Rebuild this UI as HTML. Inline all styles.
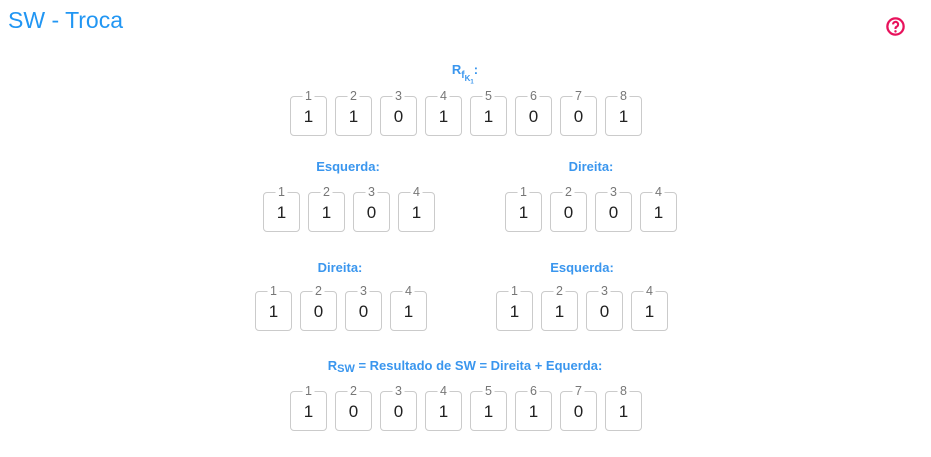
<!DOCTYPE html>
<html><head><meta charset="utf-8"><style>
body{margin:0;width:931px;height:457px;background:#fff;font-family:"Liberation Sans",Arial,sans-serif;position:relative;overflow:hidden}
.t{position:absolute;left:8px;top:7px;font-size:23px;color:#2196f3}
.lbl{position:absolute;font-size:13px;font-weight:bold;color:#3a96ee;transform:translateX(-50%);white-space:nowrap}
.b{position:absolute;width:35px;height:38px;border:1px solid #cbcbcb;border-radius:4px;box-sizing:content-box}
.b span.n{position:absolute;left:50%;top:-8px;transform:translateX(-50%);background:#fff;padding:0 3px;font-size:12.5px;color:#777;line-height:14px}
.b span.v{position:absolute;left:0;right:0;top:10px;text-align:center;font-size:17px;color:#222;line-height:20px}
</style></head><body>
<div class="t">SW - Troca</div>
<svg style="position:absolute;left:885px;top:16px" width="21" height="21" viewBox="0 0 24 24"><circle cx="12" cy="12" r="9.3" fill="none" stroke="#e8125c" stroke-width="2.6"/><path d="M9.2 9.6a2.9 2.9 0 1 1 4.1 2.6c-.9.5-1.3 1-1.3 2v.6" fill="none" stroke="#e8125c" stroke-width="2.4"/><circle cx="12" cy="17.6" r="1.4" fill="#e8125c"/></svg>
<div class="lbl" style="left:465px;top:62px">R<sub style="font-size:10px">f<sub style="font-size:8px">K<sub style="font-size:6px">1</sub></sub></sub>:</div>
<div class="lbl" style="left:348px;top:159px">Esquerda:</div>
<div class="lbl" style="left:591px;top:159px">Direita:</div>
<div class="lbl" style="left:340px;top:260px">Direita:</div>
<div class="lbl" style="left:582px;top:260px">Esquerda:</div>
<div class="lbl" style="left:465px;top:358px">R<span style="font-size:11px;position:relative;top:2px">SW</span> = Resultado de SW = Direita + Equerda:</div>
<div id="c"></div>
<script>
var rows=[[290,96,"11011001"],[263,192,"1101"],[505,192,"1001"],[255,291,"1001"],[496,291,"1101"],[290,391,"10011101"]];
var h="";rows.forEach(function(r){for(var i=0;i<r[2].length;i++){h+='<div class="b" style="left:'+(r[0]+45*i)+'px;top:'+r[1]+'px"><span class="n">'+(i+1)+'</span><span class="v">'+r[2][i]+'</span></div>';}});
document.getElementById("c").innerHTML=h;
</script>
</body></html>
